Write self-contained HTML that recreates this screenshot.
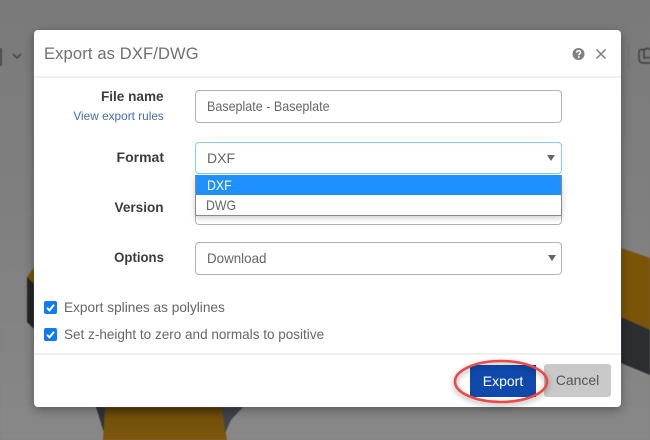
<!DOCTYPE html>
<html><head><meta charset="utf-8"><style>
html,body{margin:0;padding:0}
body{width:650px;height:440px;overflow:hidden;position:relative;background:#7f7f7f;font-family:"Liberation Sans",sans-serif;color:#555}
.abs{position:absolute;white-space:nowrap}
#bg{position:absolute;left:0;top:0;filter:blur(.5px)}
#modal{position:absolute;left:34px;top:30px;width:587px;height:377px;background:#fff;border-radius:4px;box-shadow:0 3px 10px rgba(0,0,0,.35)}
.lab{position:absolute;right:457px;font-weight:bold;font-size:14px;color:#3c3c3c;white-space:nowrap;transform:scaleX(.97);transform-origin:right center}
.box{position:absolute;left:161px;width:365px;height:31px;border:1px solid #b3b3b3;border-radius:4px;background:#fff;font-size:14px;color:#666;line-height:31px}
.t{display:inline-block;transform-origin:left center;margin-left:11px}
.arrow{position:absolute;width:0;height:0;border-left:4px solid transparent;border-right:4px solid transparent;border-top:6px solid #666}
.cb{position:absolute;left:10px;width:13px;height:13px;background:#0d7bf5;border-radius:2px}
</style></head><body>
<svg id="bg" width="650" height="440" viewBox="0 0 650 440">
<defs>
<linearGradient id="g" x1="0" y1="0" x2="0" y2="1"><stop offset="0" stop-color="#7a7a7a"/><stop offset=".5" stop-color="#808080"/><stop offset="1" stop-color="#888888"/></linearGradient>
<linearGradient id="o" x1="0" y1="0" x2="0" y2="1"><stop offset="0" stop-color="#5a3f08"/><stop offset=".35" stop-color="#74500a"/><stop offset="1" stop-color="#7d570c"/></linearGradient>
</defs>
<rect width="650" height="440" fill="url(#g)"/>
<polygon points="27,277 34,267 34,290" fill="#7a5408"/>
<polygon points="27,277 34,284 34,329 27,322" fill="#252628"/>
<polygon points="621,248 650,258 650,330 621,317" fill="#7a5408"/>
<polygon points="621,317 650,330 650,375 621,363" fill="#2b2d31"/>
<polygon points="96,407 106,407 104,433" fill="#2f3338"/>
<polygon points="105,407 222,407 227,440 103,440" fill="url(#o)"/>
<polygon points="222,407 243,407 231,420 225,433" fill="#3f444a"/>
<g fill="none" stroke="#3a3a3a" stroke-width="1.4">
<path d="M13 54l4 4 4-4"/>
<path d="M-2 49h3v16h-3"/>
<path d="M639 52c0-3 4-3 5-2v8c3-1 8 0 9 0v5h-9c-3 0-5-1-5-4z"/>
<path d="M644 50c2-2 6-2 6 0"/>
</g>
<rect x="628" y="44" width="1.5" height="24" fill="#747474"/>
</svg>
<div id="modal">
<div class="abs" style="left:10px;top:15px;font-size:16.5px;color:#6f6f6f;letter-spacing:.15px">Export as DXF/DWG</div>
<svg class="abs" style="left:538px;top:17px" width="14" height="14" viewBox="0 0 14 14"><circle cx="6.5" cy="7" r="6" fill="#808080"/><path d="M4.6 5.6c0-2.6 3.9-2.6 3.9-.2 0 1.5-1.7 1.4-1.7 2.8" fill="none" stroke="#fff" stroke-width="1.5"/><rect x="6" y="9.2" width="1.6" height="1.6" fill="#fff"/></svg>
<svg class="abs" style="left:562px;top:19px" width="10" height="10" viewBox="0 0 10 10"><path d="M.5.5l9 9M9.5.5l-9 9" stroke="#808080" stroke-width="1.5" fill="none"/></svg>
<div class="abs" style="left:0;top:46px;width:587px;height:1.5px;background:#f0f0f0"></div>

<div class="lab" style="top:58px">File name</div>
<div class="abs" style="right:457px;top:79px;font-size:12px;color:#4468b8;transform:scaleX(.985);transform-origin:right center">View export rules</div>
<div class="box" style="top:60px"><span class="t" style="transform:scaleX(.895)">Baseplate - Baseplate</span></div>

<div class="lab" style="top:119px;transform:scaleX(1)">Format</div>
<div class="box" style="top:112px;height:30px;line-height:30px;border-color:#8cc8f5"><span class="t">DXF</span></div>
<div class="arrow" style="left:513px;top:125px"></div>

<div class="lab" style="top:169px">Version</div>
<div class="box" style="top:170px;height:23px"></div>

<div class="lab" style="top:219px;transform:scaleX(.94)">Options</div>
<div class="box" style="top:212px"><span class="t" style="transform:scaleX(.955)">Download</span></div>
<div class="arrow" style="left:514px;top:225px"></div>

<div class="abs" style="left:161px;top:145px;width:365px;height:40px;border:1px solid #8a8a8a;border-top:0;background:#fff;box-shadow:0 2px 6px rgba(0,0,0,.2);font-size:14px;line-height:20px">
 <div style="background:#1e90ff;color:#fff;height:20px;padding-left:11px"><span style="display:inline-block;transform:scaleX(.88);transform-origin:left center">DXF</span></div>
 <div style="height:20px;padding-left:10px;color:#666"><span style="display:inline-block;transform:scaleX(.88);transform-origin:left center">DWG</span></div>
</div>

<div class="cb" style="top:271px"><svg width="13" height="13" viewBox="0 0 13 13" style="display:block"><path d="M3 6.8l2.5 2.6L10 3.8" fill="none" stroke="#fff" stroke-width="2"/></svg></div>
<div class="abs" style="left:30px;top:269px;font-size:14px;color:#666;transform:scaleX(.975);transform-origin:left center">Export splines as polylines</div>
<div class="cb" style="top:298px"><svg width="13" height="13" viewBox="0 0 13 13" style="display:block"><path d="M3 6.8l2.5 2.6L10 3.8" fill="none" stroke="#fff" stroke-width="2"/></svg></div>
<div class="abs" style="left:30px;top:296px;font-size:14px;color:#666;transform:scaleX(.966);transform-origin:left center">Set z-height to zero and normals to positive</div>

<div class="abs" style="left:0;top:323px;width:587px;height:1.5px;background:#f0f0f0"></div>

<div class="abs" style="left:436px;top:335px;width:66px;height:32px;background:#0f49ac;color:#fff;font-size:14px;line-height:32px;text-align:center">Export</div>
<div class="abs" style="left:510px;top:334px;width:67px;height:33px;background:#c9c9c9;color:#555;font-size:14px;line-height:33px;text-align:center;border-radius:3px">Cancel</div>
</div>
<svg class="abs" style="left:0;top:0;filter:drop-shadow(0 2px 3px rgba(0,0,0,.4))" width="650" height="440"><ellipse cx="501" cy="381.5" rx="46" ry="20.5" fill="none" stroke="#ea4a4a" stroke-width="2.6"/></svg>
</body></html>
